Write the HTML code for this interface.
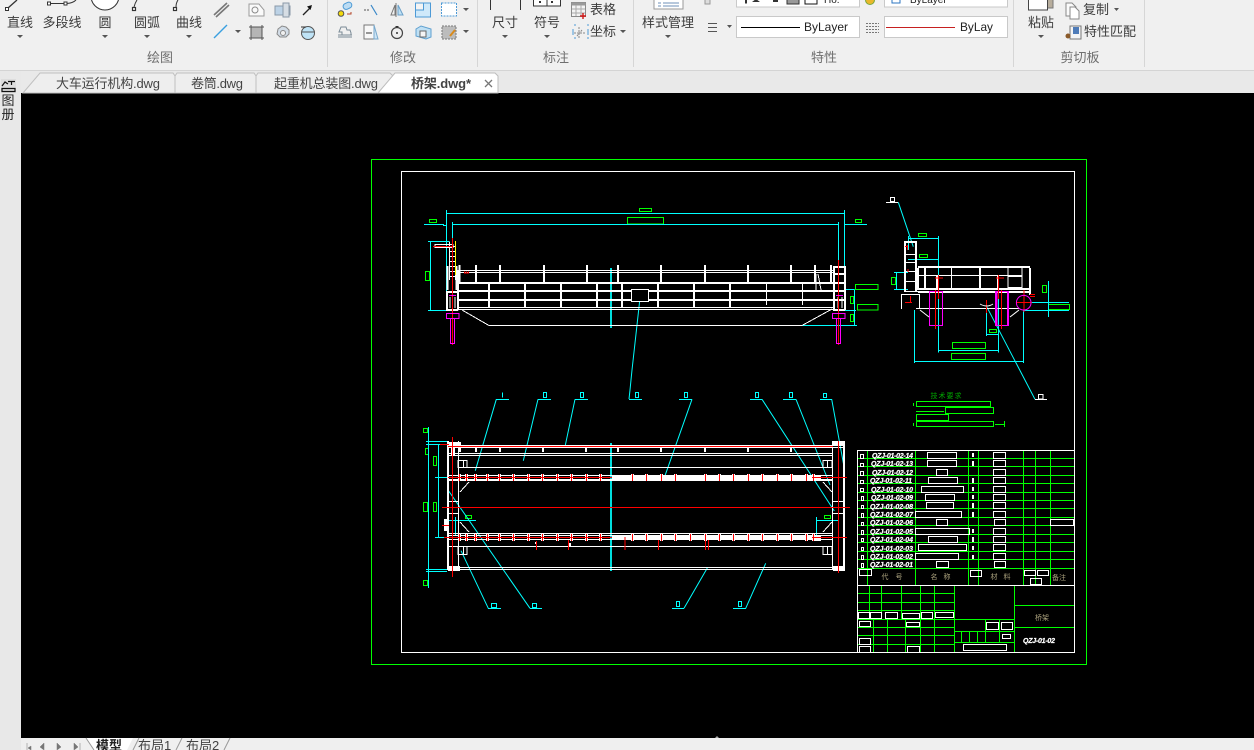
<!DOCTYPE html>
<html lang="zh">
<head>
<meta charset="utf-8">
<title>桥架.dwg</title>
<style>
html,body{margin:0;padding:0;width:1254px;height:750px;overflow:hidden;background:#f0f0f0}
svg{display:block;position:absolute;left:0;top:0}
text{font-family:"Liberation Sans","Noto Sans CJK SC",sans-serif}
.l{font-size:13px;fill:#3c3c3c;text-anchor:middle}
.g{font-size:13px;fill:#6f6f6f;text-anchor:middle}
.t{font-size:13px;fill:#444}
.b{font-size:7px;font-weight:bold;font-style:italic;fill:#fff;stroke:#fff;stroke-width:.25}
.c{font-size:7px;fill:#a9a07c;text-anchor:middle}
</style>
</head>
<body>
<svg width="1254" height="750" viewBox="0 0 1254 750" xmlns="http://www.w3.org/2000/svg">
<defs>
<path id="ticks" d="M459.500 474v7M466.500 474v7M475.500 474v7M487.500 474v7M499.500 474v7M513.500 474v7M528.500 474v7M542.500 474v7M557.500 474v7M571.500 474v7M586.500 474v7M600.500 474v7M632.500 474v7M646.500 474v7M661.500 474v7M675.500 474v7M705.500 474v7M719.500 474v7M733.500 474v7M748.500 474v7M762.500 474v7M777.500 474v7M791.500 474v7M806.500 474v7M813.500 474v7
M459.500 534v7M466.500 534v7M475.500 534v7M487.500 534v7M499.500 534v7M513.500 534v7M528.500 534v7M542.500 534v7M557.500 534v7M571.500 534v7M586.500 534v7M600.500 534v7M632.500 534v7M646.500 534v7M661.500 534v7M675.500 534v7M690.500 534v7M705.500 534v7M719.500 534v7M733.500 534v7M748.500 534v7M762.500 534v7M777.500 534v7M791.500 534v7M806.500 534v7M813.500 534v7"/>
</defs>
<!-- chrome -->
<rect width="1254" height="70" fill="#f0f0f0"/>
<rect y="70" width="1254" height="1" fill="#d4d4d4"/>
<rect y="71" width="1254" height="22" fill="#e9e9e9"/>
<rect y="71" width="21" height="679" fill="#e8e8e8"/>
<rect x="21" y="93" width="1233" height="645" fill="#000"/>
<rect x="21" y="738" width="1233" height="12" fill="#efefef"/>
<g fill="#d6d6d6"><rect x="327" y="0" width="1" height="67"/><rect x="477" y="0" width="1" height="67"/><rect x="633" y="0" width="1" height="67"/><rect x="1013" y="0" width="1" height="67"/><rect x="1144" y="0" width="1" height="67"/></g>

<!-- ribbon labels -->
<text class="l" x="20" y="27">直线</text>
<text class="l" x="62" y="27">多段线</text>
<text class="l" x="105" y="27">圆</text>
<text class="l" x="147" y="27">圆弧</text>
<text class="l" x="189" y="27">曲线</text>
<text class="g" x="160" y="62">绘图</text>
<text class="g" x="403" y="62">修改</text>
<text class="l" x="505" y="27">尺寸</text>
<text class="l" x="547" y="27">符号</text>
<text class="l" x="603" y="14">表格</text>
<text class="l" x="603" y="36">坐标</text>
<text class="g" x="556" y="62">标注</text>
<text class="l" x="668" y="27">样式管理</text>
<text class="g" x="824" y="62">特性</text>
<text class="l" x="1041" y="27">粘贴</text>
<text class="l" x="1096" y="14">复制</text>
<text class="l" x="1110" y="36">特性匹配</text>
<text class="g" x="1080" y="62">剪切板</text>

<!-- dropdown arrows -->
<path fill="#555" d="M17 35h6l-3 3zM102 35h6l-3 3zM144 35h6l-3 3zM186 35h6l-3 3zM235 30h6l-3 3zM463 8h6l-3 3zM463 30h6l-3 3zM502 35h6l-3 3zM544 35h6l-3 3zM620 30h6l-3 3zM665 35h6l-3 3zM727 25h5l-2.500 3zM1038 35h6l-3 3zM1114 8h5l-2.500 3zM849 25h5l-2.500 3zM998 25h5l-2.500 3z"/>

<!-- draw icons -->
<g fill="none" stroke="#333" stroke-width="1">
<path d="M8 8L17 0" stroke-width="1.300"/><rect x="5.500" y="7.500" width="3" height="3" fill="#fff"/>
<path d="M50 3.500H64M67 3.500Q73 3 76 0"/><rect x="47.500" y="2" width="3" height="3" fill="#fff"/><rect x="64" y="2" width="3" height="3" fill="#fff"/>
<circle cx="105" cy="-4" r="14" fill="#fff"/>
<path d="M134 7Q135 3 137 0"/><rect x="132.500" y="7.500" width="3" height="3" fill="#fff" stroke-width="1.200"/>
<path d="M176 7Q176 3 178 0"/><rect x="173.500" y="7.500" width="3" height="3" fill="#fff" stroke-width="1.200"/>
</g>
<path d="M214 15L227 3M216 17L229 5" stroke="#777" stroke-width="1.600" fill="none"/>
<path d="M214 38L227 25" stroke="#3aa0e0" stroke-width="1.400" fill="none"/>
<path d="M249 4h10l5 6v6h-15z" fill="#fafafa" stroke="#9b9b9b"/><circle cx="255" cy="10" r="3" fill="none" stroke="#8a8a8a"/>
<path d="M275 6h15v9h-15z" fill="#bcd2e6" stroke="#8a99a8"/><rect x="283" y="3" width="6" height="14" fill="#d6dde4" stroke="#8a99a8"/>
<path d="M303 15L311 7" stroke="#222" stroke-width="1.300"/><path d="M312 5l-5 1.500 3.500 3.500z" fill="#111"/>
<rect x="251" y="27" width="11" height="11" fill="#b5b5b5" stroke="#555"/><path d="M249 27h15M249 38h15M251 25v15M262 25v15" stroke="#555" fill="none"/>
<path d="M278 29l4-3 4 1 3 3v4l-3 3h-6l-3-3z" fill="#d2dce6" stroke="#8a8a8a"/><circle cx="283" cy="33" r="2.500" fill="#f0f0f0" stroke="#8a8a8a"/>
<circle cx="308" cy="33" r="6.500" fill="#bfe3f6" stroke="#555"/><path d="M302 32h13" stroke="#555"/><path d="M301 27h5" stroke="#333"/>

<!-- modify icons -->
<circle cx="341" cy="13.500" r="2.800" fill="#f4d90a" stroke="#555"/><rect x="343" y="3" width="9" height="6" rx="3" fill="#bcdcf3" stroke="#4e9bd5" transform="rotate(-25 347 6)"/><path d="M347 14h4v-2" stroke="#b4462a" fill="none"/>
<path d="M364 10h6" stroke="#555" stroke-dasharray="2 1"/><path d="M371 5l6 10" stroke="#3a88c8" stroke-width="1.200" fill="none"/>
<path d="M396 3v14M395 5l-4 10h4z" stroke="#777" fill="none"/><path d="M398 5l5 10h-5z" fill="#bfe0f4" stroke="#6aa0c8"/>
<rect x="415.500" y="3" width="15" height="14" fill="#cfe9fa" stroke="#4d9ad6"/><rect x="415.500" y="3" width="8" height="7" fill="#f4f4f4" stroke="#4d9ad6"/>
<rect x="441.500" y="3" width="15" height="13" fill="#fff" stroke="#4d9ad6" stroke-dasharray="2 1"/>
<path d="M338 35h14M338 37h14M342 35v-3h-3l2-5h5l1 3h3l1 3v2" fill="none" stroke="#7a8a96"/>
<rect x="364" y="25" width="10" height="14" fill="#f8f8f8" stroke="#777"/><path d="M374 25l4 14h-4z" fill="#cfe6f6" stroke="#78a8cc"/><path d="M366 33h6" stroke="#333"/>
<circle cx="397" cy="33" r="5.500" fill="none" stroke="#444" stroke-width="1.200"/><circle cx="397" cy="33" r="1" fill="#333"/><path d="M395 26h4l-2 2z" fill="#333"/>
<path d="M416 29l5-3 10 3v8l-5 2-10-3z" fill="#bfe0f4" stroke="#5fa0cf"/><rect x="420" y="31" width="6" height="6" fill="#f5f5f5" stroke="#666"/>
<rect x="442" y="26" width="14" height="13" fill="#bcbcbc" stroke="#777" stroke-dasharray="2 1"/><path d="M450 36l5-6" stroke="#d98a1b" stroke-width="2"/>

<!-- dim / table icons -->
<path d="M490.500 0V10M520.500 0V10" stroke="#333"/>
<rect x="533.500" y="-4" width="27" height="10" fill="#fff" stroke="#333"/><path d="M547 -4V6" stroke="#333"/><rect x="539" y="1" width="2" height="2" fill="#333"/><rect x="551" y="1" width="2" height="2" fill="#333"/>
<rect x="571.500" y="2.500" width="14" height="14" fill="#f3f3f3" stroke="#8a8a8a"/><rect x="571.500" y="2.500" width="14" height="3" fill="#9a9a9a"/><path d="M576 5v11M581 5v11M572 9h13M572 13h13" stroke="#aaa"/><path d="M583 13v6M580 16h6" stroke="#d01818" stroke-width="1.400"/>
<path d="M574 25h2M574 38h2M587 25h2M587 38h2M573 29v6M588 29v6" stroke="#4d9ad6"/><path d="M579 27v12M574 33h12M582 30l-5 6" stroke="#888" stroke-dasharray="2 1"/>
<rect x="654" y="-4" width="29" height="13" fill="#fff" stroke="#9a9a9a"/><path d="M658 3h3M663 3h16M658 6h3M663 6h16" stroke="#6f90b8"/>
<path d="M708 23.500h9M708 27.500h9M708 31.500h9" stroke="#555"/>
<rect x="705" y="-2" width="5" height="6" fill="#ddd" stroke="#999"/>

<!-- combos -->
<g fill="#fff" stroke="#c9c9c9"><rect x="736.500" y="-3.500" width="123" height="10.500"/><rect x="884.500" y="-3.500" width="123" height="10.500"/><rect x="736.500" y="16.500" width="123" height="21"/><rect x="884.500" y="16.500" width="123" height="21"/></g>
<path d="M741 27.500H800" stroke="#000"/><path d="M886 27.500H955" stroke="#c62020"/>
<text x="804" y="31" font-size="12" fill="#222">ByLayer</text>
<text x="960" y="31" font-size="12" fill="#222" textLength="33" lengthAdjust="spacingAndGlyphs">ByLay</text>
<text x="824" y="3" font-size="10" fill="#222">Ho.</text>
<text x="910" y="3" font-size="10" fill="#222">ByLayer</text>
<rect x="892" y="-3" width="8" height="6" fill="#fff" stroke="#2b74c0"/>
<path d="M745 -1v4l1 1 1-1v-4zM752 2l4-3 4 3M773 -1h5v3h-5z" fill="#333"/>
<path d="M787 -1h12v5h-12z" fill="#999" stroke="#333"/><rect x="805" y="-2" width="12" height="6" fill="#fff" stroke="#111"/>
<circle cx="870" cy="0" r="4.500" fill="#e9b82b" stroke="#7aa83a"/>
<path d="M866 23.500h13M866 26.500h13M866 29.500h13M866 32.500h13" stroke="#777" stroke-dasharray="2 1"/>

<!-- clipboard -->
<path d="M1047 -2h6v10h-6z" fill="#b7ad9c" stroke="#777"/><rect x="1028.500" y="-4" width="19" height="14" fill="#fff" stroke="#444"/>
<path d="M1066 3h6l4 4v9h-10z" fill="#fbfbfb" stroke="#888"/><path d="M1070 7h5l4 4v8h-9z" fill="#fff" stroke="#888"/>
<rect x="1070" y="26" width="11" height="13" fill="#f5f5f5" stroke="#777"/><rect x="1073" y="27" width="6" height="7" fill="#4f7cb8"/><circle cx="1068" cy="36" r="2.500" fill="#8a5a2a"/>

<!-- document tabs -->
<path d="M23 93L40 73H173l2 3V93z" fill="#eeeeee" stroke="#c0c0c0"/>
<path d="M175 93V76l2-3H254l2 3V93z" fill="#eeeeee" stroke="#c0c0c0"/>
<path d="M256 93V76l2-3H390l3 3L378 93z" fill="#eeeeee" stroke="#c0c0c0"/>
<path d="M378 93L395 73H495l3 3V93z" fill="#fff" stroke="#bdbdbd"/>
<text class="t" x="56" y="88" textLength="104">大车运行机构.dwg</text>
<text class="t" x="191" y="88" textLength="52">卷筒.dwg</text>
<text class="t" x="274" y="88" textLength="104">起重机总装图.dwg</text>
<text class="t" x="411" y="88" font-weight="bold" fill="#222" textLength="60">桥架.dwg*</text>
<path d="M485 80l7 7M492 80l-7 7" stroke="#777" stroke-width="1.300"/>

<!-- left strip -->
<rect x="1" y="79" width="15" height="14" fill="#ddd"/>
<path d="M2 86l3-4 3 2M8 81.500h7M11.500 81v4M2 88.500h13v3H2z" fill="none" stroke="#111" stroke-width="1.200"/>
<text x="8" y="105" font-size="13" fill="#222" text-anchor="middle">图</text>
<text x="8" y="119" font-size="13" fill="#222" text-anchor="middle">册</text>

<!-- bottom tabs -->
<path d="M27 743v7M31 746l-3 2 3 2zM44 743l-4 4 4 3zM57 743l4 4-4 3zM74 743l4 4-4 3zM80 743v7" fill="#777" stroke="#777" stroke-width=".5"/>
<path d="M86 738L94 750H127L133 738z" fill="#fff"/>
<path d="M86 738L94 750M133 750l6-12M176 750l6-12M224 750l6-12" stroke="#999" fill="none"/>
<text x="96" y="750" font-size="13" font-weight="bold" fill="#222">模型</text>
<text x="138" y="750" font-size="13" fill="#444">布局1</text>
<text x="186" y="750" font-size="13" fill="#444">布局2</text>
<path d="M715 738l2-2 2 2z" fill="#aaa"/>

<!-- CAD drawing -->
<g fill="none" shape-rendering="crispEdges">
<!-- frames -->
<rect x="371.500" y="159.500" width="715" height="505" stroke="#00ff00"/>
<rect x="401.500" y="171.500" width="673" height="481" stroke="#fff"/>

<!-- green -->
<path stroke="#00ff00" d="M639.500 208.500h12v3h-12zM627.500 217.500h36v6.500h-36zM429.500 219.500h7v3h-7zM855.500 219.500h6v3h-6zM425.500 271.500h4v9h-4zM855.500 284.500h22.500v5h-22.500zM857.500 304.500h20.500v5.500h-20.500zM850.500 296.500h3v7h-3zM850.500 314.500h3v7h-3z
M423.500 428.500h4v4h-4zM425.500 448.500h3v6h-3zM433.500 456.500h3v9h-3zM423.500 502.500h4v9h-4zM433.500 502.500h3v9h-3zM423.500 580.500h4v5h-4zM465.500 515.500h6v3h-6zM824.500 515.500h6v3h-6z
M952.500 342.500h33v6h-33zM951.500 353.500h34v6h-34zM918.500 233.500h8v3h-8zM919.500 254.500h8v3h-8zM891.500 277.500h4v7h-4zM1042.500 285.500h4v7h-4zM1048.500 304.500h21v5h-21zM989.500 329.500h7v3h-7z
M916.500 401.500h74v5h-74zM945.500 407.500h48v6h-48zM916.500 414.500h32v6h-32zM916.500 421.500h77v5h-77zM913.500 403v3M913.500 423v3M1004.500 421v6
M916 411.500h28M995 424.500h9"/>

<!-- cyan -->
<path stroke="#00ffff" d="M446.500 210V310M844.500 210V310M446.500 213.500H844.500M424 224.500H443.500v1H446M453 224.500H838M845 224.500H867M452.500 222V242M838.500 222V260
M430.500 241.500V310.500M428 241.500H449M428 310.500H449M854.500 289.500V325M845 289.500H854.500M845 310.500H856M797 325.500H857
M496 399.500H509M538 399.500H551M575 399.500H588M629 399.500H642M679 399.500H692M750 399.500H762M783 399.500H796M820 399.500H832
M488 608.500H501M530 608.500H542M672 608.500H684M733 608.500H746
M502.500 392.500v5M543.500 392.500h3v5h-3zM580.500 392.500h3v5h-3zM635.500 392.500h3v5h-3zM684.500 392.500h3v5h-3zM755.500 392.500h3v5h-3zM789.500 392.500h3v5h-3zM823.500 393.500h3v4h-3z
M491.500 603.500h5v4h-5zM532.500 603.500h4v4h-4zM676.500 601.500h3v5h-3zM738.500 601.500h3v5h-3z
M428.500 427V588M438.500 445V537M426 441.500H448M426 444.500H448M426 569.500H447M426 571.500H447M435 477.500H448M435 537.500H445
M446.500 520.500H476M455.500 517V535M816.500 517V535M816.500 520.500H838M838.500 517V568
M938.500 236V352.500M908 238.500H938.500M908 259.500H938.500M998.500 292V352.500M938.500 350.500H998.500M914.500 310V363M1023.500 310V363M914.500 361.500H1023.500M986.500 313V336M986.500 334.500H998M894 272.500H908M894 289.500H908M896.500 272V289M1048.500 281V317M1023 302.500H1069M1023 310.500H1069M908.500 236V250"/>
</g>
<g fill="none" stroke="#00ffff">
<path d="M640 298L632 370L630 390L629 399"/>
<path d="M496.300 399.300L475.300 470.700M538 399.300L523.300 460.700M575 399.300L565 446.700M692 399.300L664.300 477.700M762 399.300L834.300 511M796 399.300L830 485M831.700 399.300L843.700 465"/>
<path d="M461 550.700L488.300 608.300M447.300 489L530 608.300M707.300 568L684 608.300M765.700 563.300L745.700 608.300"/>
<path d="M898.300 202.300L913.300 246.700M986.700 306.700L1035 399.300"/>
</g>
<g shape-rendering="crispEdges">
<rect x="610" y="268" width="2" height="60" fill="#00dede"/>
<rect x="610" y="443" width="2" height="128" fill="#00dede"/>
</g>

<g fill="none" shape-rendering="crispEdges">
<!-- TOP VIEW white -->
<path stroke="#fff" d="M458 270.500H833M458 272.500H833M458 307.500H833M458 309.500H833
M766.500 283V305M802.500 283V305
M462 310L489 325.500H802L832 309M446.500 292.500H458V310H446.500ZM449.500 241.500V280M455.500 241.500V280M449 246.500h7M449 251.500h7M449 256.500h7M449 261.500h7M449 266.500h7M449 271.500h7M449 276.500h7
M450 297V308M455 297V308M838 297V308M842 297V308M816 274V290M818 274l3 16"/>
<path stroke="#fff" stroke-width="2" d="M459.500 265V282M476 265V282M500 265V282M544 265V282M587 265V282M618 265V282M661 265V282M705 265V282M748 265V282M791 265V282M815 265V282M831 265V282
M458 283H833M458 291H833M458 300H833M489 283V307M525 283V307M561 283V307M597 283V307M622 283V307M658 283V307M694 283V307M730 283V307
M447.500 266V290M456.500 266V290M446 292H458M446 310H458M447 292V310M458 270V310
M834 266V310M845 266V310M833 267H845M833 274H845M833 283H845M833 291H845M833 300H845M833 310H845"/>
<rect x="631.500" y="289.500" width="17" height="12" fill="#000" stroke="#fff"/>
<path stroke="#ffff00" d="M455.500 241V275"/>
<path stroke="#fff" d="M435 244.500H453V247.500H435Z"/>
<path stroke="#ff0000" d="M433 246.500H453M452.500 238V345M838.500 260V345M464 272h1M466 272h1M468 272h1M464 273h5"/>
<path stroke="#ff00ff" d="M446.500 313.500h12.500v5h-12.500zM450.500 318.500h4v25h-4zM832.500 313.500h12.500v5h-12.500zM836.500 318.500h4v25h-4z"/>
<path stroke="#ff00ff" d="M449 295.500h7M836 295.500h7"/>

<!-- PLAN VIEW white -->
<path stroke="#fff" d="M448 445.500H843M448 447.500H843M448 453.500H832M448 455.500H832M458 467.500H832M448 475.500H832M448 479.500H832M448 480.500H832M448 533.500H832M448 535.500H832M448 539.500H832M448 546.500H832M448 567.500H843M448 569.500H843
M458.500 441V570M832.500 441V570M448 501.500H458M448 513.500H458M832 501.500H843M832 513.500H843
M458 460.500h9v7h-9zM463.500 460V467M823 460.500h9v7h-9zM827.500 460V467M458 546.500h9v8h-9zM463.500 546V554M823 546.500h9v8h-9zM827.500 546V554
M460 492L469 482M460 522L469 532M832 492L823 482M832 522L823 532"/>
<path stroke="#fff" stroke-width="2" d="M460 447v5M476 447v5M500 447v5M543 447v5M586 447v5M618 447v5M661 447v5M705 447v5M748 447v5M791 447v5"/>
<path stroke="#fff" stroke-width="2" d="M448 441V570M844 441V570"/>
<path stroke="#fff" stroke-width="4" d="M612 477.500H815M612 537.500H815"/>
<use href="#ticks" stroke="#fff" stroke-width="3"/>
<use href="#ticks" stroke="#ff0000" stroke-width="1"/>
<g fill="#fff" stroke="none"><rect x="449" y="442" width="12" height="5"/><rect x="833" y="441" width="11" height="5"/><rect x="448" y="566" width="12" height="5"/><rect x="833" y="566" width="12" height="5"/><rect x="444" y="519" width="4" height="12"/><rect x="451" y="443" width="4" height="12"/><rect x="815" y="475" width="6" height="6"/><rect x="815" y="535" width="6" height="6"/><rect x="535" y="542" width="2" height="2"/><rect x="568" y="543" width="3" height="3"/></g>
<path stroke="#ff0000" d="M440 444.500H449M448 446.500H833M448 477.500H612M812 477.500H847M444 537.500H612M812 537.500H847M442 507.500H850M452.500 437V577M838.500 441V573M442 525.500H449
M536.500 541V550M568.500 540V550M625 537V550M658.500 540V550M705.500 540V550M708.500 540V550"/>

<!-- SIDE VIEW -->
<path stroke="#fff" d="M890.500 197.500h4v4h-4zM1038.500 394.500h4.500v4.500h-4.500zM1035 399.500H1047M886 202.500H898
M904 254.500H917M904 262.500H917M904 271.500H917M904 281.500H917M904 291.500H1030M901.500 294V309M919.500 294V309M901 294.500H919M916 308.500H1019
M951.500 268V290M1029.500 267V295M918 275.500H1008M1008 266V290M1022 266V290"/>
<path stroke="#fff" stroke-width="2" d="M905 241V291M916 241V291M904 242H917M918 268V290M925 268V290M980 268V290M1030 268V295M918 267H1030M918 289H1030M918 292H1030M937 275V290M998 275V290M1008 276H1022M1008 288H1022"/>
<path stroke="#ff00ff" d="M929.500 291.500h13v34h-13zM995.500 291.500h13v34h-13z"/>
<path stroke="#ff00ff" stroke-width="2" d="M996.500 292V325M1008 292V325"/>
<path stroke="#ff0000" d="M935.500 290V329M938.500 275V299M998.500 275V299M1001.500 290V329M986.500 300V313M935 278h8M996 278h8M1024 290V312M1016 302.500H1032M905 246.500h3M907.500 245V250M908 269V272M910.500 296V302M905 302.500H912M1030 294.500h5M1030 296.500h5"/>
</g>
<circle cx="1023.700" cy="302.700" r="7.300" fill="none" stroke="#ff00ff"/>
<path d="M980 304q7 4 13 0M920 310l9 7M1019 310l-9 7" stroke="#fff" fill="none"/>
<text x="946.500" y="398" font-size="7" fill="#00a800" text-anchor="middle" letter-spacing="1">技术要求</text>

<!-- title block -->
<g fill="none" shape-rendering="crispEdges">
<path stroke="#00ff00" d="M858 458.500H1074M858 466.500H1074M858 475.500H1074M858 483.500H1074M858 492.500H1074M858 500.500H1074M858 508.500H1074M858 517.500H1074M858 525.500H1074M858 534.500H1074M858 542.500H1074M858 551.500H1074M858 559.500H1074M858 568.500H1074
M867.500 450V585M915.500 450V585M968.500 450V585M978.500 450V585M1023.500 450V585M1035.500 450V585M1050.500 450V585
M858 593.500H954M858 602.500H954M858 610.500H954M858 619.500H954M858 627.500H954M858 635.500H954M858 644.500H954
M869.500 585V619M881.500 585V619M901.500 585V619M920.500 585V619M934.500 585V652M873.500 619V652M887.500 619V652M905.500 619V652M920.500 619V652
M954.500 585V652M1014.500 585V652M1014 605.500H1074M1014 627.500H1074M954 619.500H1014M954 631.500H1014M954 642.500H1014M961.500 631V642M969.500 631V642M977.500 631V642M985.500 631V642M985.500 619V642M999.500 619V642"/>
<path stroke="#fff" d="M857.500 450.500H1074.500M857.500 450V652M857 585.500H1074
M927.500 452.500h29v6h-29zM927.500 460.500h29v6h-29zM936.500 469.500h11v6h-11zM928.500 477.500h29v6h-29zM921.500 486.500h42v6h-42zM925.500 494.500h29v6h-29zM926.500 502.500h27v6h-27zM915.500 511.500h46v6h-46zM936.500 519.500h11v6h-11zM915.500 528.500h54v6h-54zM928.500 536.500h29v6h-29zM918.500 544.500h48v6h-48zM915.500 553.500h43v6h-43zM936.500 561.500h12v6h-12z
M993.500 452.500h12v6h-12zM993.500 460.500h12v6h-12zM993.500 469.500h12v6h-12zM993.500 477.500h12v6h-12zM993.500 486.500h12v6h-12zM993.500 494.500h12v6h-12zM993.500 502.500h12v6h-12zM993.500 511.500h12v6h-12zM994.500 519.500h11v6h-11zM993.500 528.500h12v6h-12zM993.500 536.500h12v6h-12zM993.500 544.500h12v6h-12zM993.500 553.500h12v6h-12zM994.500 561.500h11v6h-11z
M860.500 454.500h3v4h-3zM860.500 463.500h3v3h-3zM860.500 471.500h3v4h-3zM860.500 480.500h3v3h-3zM860.500 488.500h3v3h-3zM861.500 496.500h2v4h-2zM861.500 505.500h2v3h-2zM861.500 513.500h2v4h-2zM861.500 522.500h2v3h-2zM861.500 530.500h2v4h-2zM861.500 538.500h2v3h-2zM861.500 547.500h2v3h-2zM861.500 555.500h2v4h-2zM861.500 563.500h2v4h-2z
M859.500 569.500h12v6h-12zM970.500 570.500h11v6h-11zM1024.500 570.500h11v5h-11zM1037.500 570.500h11v5h-11zM1030.500 578.500h11v6h-11zM1050.500 519.500h23v6h-23z
M858.500 612.500h11v6h-11zM870.500 612.500h11v6h-11zM885.500 612.500h12v6h-12zM902.500 613.500h17v5h-17zM921.500 612.500h11v6h-11zM935.500 612.500h18v5h-18zM859.500 621.500h11v5h-11zM906.500 622.500h13v4h-13zM859.500 638.500h11v6h-11zM859.500 646.500h11v6h-11zM907.500 646.500h12v6h-12zM986.500 622.500h12v7h-12zM1001.500 622.500h11v7h-11zM1002.500 634.500h8v4h-8zM963.500 644.500h43v6h-43z"/>
<path stroke="#fff" stroke-width="2" d="M973 453v4M973 461v5M973 478v5M973 487v4M973 495v4M973 503v5M973 512v5M973 529v4M973 537v5M973 546v4M973 555v4"/>
</g>
<g class="bom">
<text class="b" x="872" y="458" textLength="41">QZJ-01-02-14</text>
<text class="b" x="871" y="466" textLength="42">QZJ-01-02-13</text>
<text class="b" x="872" y="475" textLength="41">QZJ-01-02-12</text>
<text class="b" x="870" y="483" textLength="42">QZJ-01-02-11</text>
<text class="b" x="871" y="492" textLength="42">QZJ-01-02-10</text>
<text class="b" x="871" y="500" textLength="42">QZJ-01-02-09</text>
<text class="b" x="870" y="509" textLength="43">QZJ-01-02-08</text>
<text class="b" x="870" y="517" textLength="43">QZJ-01-02-07</text>
<text class="b" x="870" y="525" textLength="43">QZJ-01-02-06</text>
<text class="b" x="870" y="534" textLength="43">QZJ-01-02-05</text>
<text class="b" x="870" y="542" textLength="43">QZJ-01-02-04</text>
<text class="b" x="870" y="551" textLength="43">QZJ-01-02-03</text>
<text class="b" x="870" y="559" textLength="43">QZJ-01-02-02</text>
<text class="b" x="870" y="567" textLength="43">QZJ-01-02-01</text>
<text class="b" x="1023" y="643" textLength="32">QZJ-01-02</text>
</g>
<text class="c" x="885" y="579">代</text><text class="c" x="899" y="579">号</text>
<text class="c" x="934" y="579">名</text><text class="c" x="947" y="579">称</text>
<text class="c" x="994" y="579">材</text><text class="c" x="1007" y="579">料</text>
<text class="c" x="1059" y="580">备注</text>
<text class="c" x="1042" y="620" font-size="8">桥架</text>
</svg>
</body>
</html>
